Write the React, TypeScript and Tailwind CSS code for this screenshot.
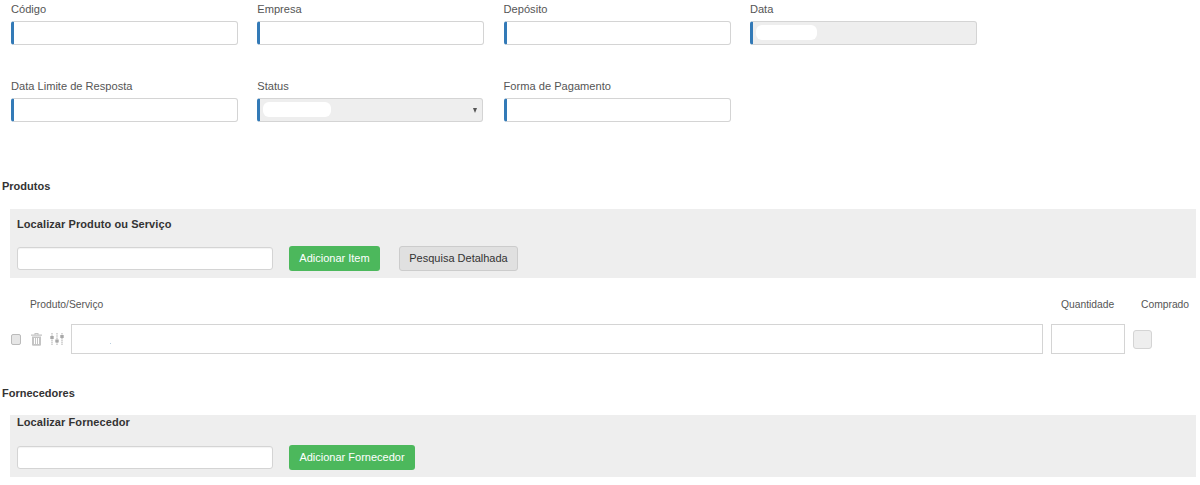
const inputBase = "block bg-white rounded-[3px] border border-[#d4d4d4] shadow-[inset_0_1px_1px_rgba(0,0,0,0.05)]";

const Field = ({ label, disabled, blob, arrow }: { label: string; disabled?: boolean; blob?: string; arrow?: boolean }) => (
  <div>
    <div className="h-[21px] text-[11.1px] leading-[18px] text-[#555]">{label}</div>
    <div
      className={`relative h-[24px] rounded-[3px] border border-[#d4d4d4] border-l-[3px] border-l-[#337ab7] ${
        disabled ? "bg-[#eeeeee]" : "bg-white"
      } ${arrow ? "mr-[1px]" : ""}`}
    >
      {blob && <div className={`absolute left-[3px] top-[3px] h-[15px] rounded-[6px] bg-white ${blob}`} />}
      {arrow && <div className="absolute right-[5px] top-[9px] h-0 w-0 border-x-[2.5px] border-t-[5px] border-x-transparent border-t-[#555]" />}
    </div>
  </div>
);

const TrashIcon = () => (
  <svg width="13" height="14" viewBox="0 0 13 14" className="shrink-0">
    <path d="M1 2.5h11v1.2H1zM4.5 1h4v1.5h-1V2h-2v.5h-1z" fill="#c4c4c4" />
    <path
      fillRule="evenodd"
      d="M2 4.5h9v8.2a1 1 0 0 1-1 1H3a1 1 0 0 1-1-1zM4 6v6h1V6zM6 6v6h1V6zM8 6v6h1V6z"
      fill="#c4c4c4"
    />
  </svg>
);

const SlidersIcon = () => (
  <svg width="14" height="14" viewBox="0 0 14 14" className="shrink-0">
    <path d="M2 1v12M7 1v12M12 1v12" stroke="#c6c6c6" strokeWidth="1.4" strokeDasharray="1.6 0.6" />
    <rect x="0.3" y="4" width="3.4" height="3" fill="#a8a8a8" />
    <rect x="5.3" y="7.5" width="3.4" height="3" fill="#a8a8a8" />
    <rect x="10.3" y="3" width="3.4" height="3" fill="#a8a8a8" />
  </svg>
);

const SectionTitle = ({ children }: { children: string }) => (
  <div className="pl-[2px] text-[11px] font-bold leading-[14px] text-[#333]">{children}</div>
);

const GreenButton = ({ children, width }: { children: string; width: string }) => (
  <div className={`flex h-[25px] items-center justify-center rounded-[3px] bg-[#4cb85c] text-[11px] text-white ${width}`}>{children}</div>
);

export default function App() {
  return (
    <div className="h-[485px] w-[1200px] overflow-hidden bg-white font-['Liberation_Sans',Arial,sans-serif]">
      <div className="grid grid-cols-[repeat(4,227px)] gap-x-[19.3px] gap-y-[32px] pl-[11px]">
        <Field label="Código" />
        <Field label="Empresa" />
        <Field label="Depósito" />
        <Field label="Data" disabled blob="w-[61px]" />
        <Field label="Data Limite de Resposta" />
        <Field label="Status" disabled blob="w-[68px]" arrow />
        <Field label="Forma de Pagamento" />
      </div>

      <div className="mt-[57px]">
        <SectionTitle>Produtos</SectionTitle>
      </div>

      <div className="ml-[10px] mt-[16px] h-[69px] w-[1186px] bg-[#eeeeee] pl-[7px] pt-[8px]">
        <div className="text-[11px] font-bold leading-[14px] tracking-[0.08px] text-[#333]">Localizar Produto ou Serviço</div>
        <div className="mt-[15px] flex items-center">
          <div className={`${inputBase} h-[23px] w-[256px]`} />
          <div className="ml-[16px]">
            <GreenButton width="w-[91px]">Adicionar Item</GreenButton>
          </div>
          <div className="ml-[19px] flex h-[25px] w-[119px] items-center justify-center rounded-[3px] border border-[#cccccc] bg-[#e0e0e0] text-[11px] text-[#333]">
            Pesquisa Detalhada
          </div>
        </div>
      </div>

      <div className="mt-[20px] flex h-[14px] items-center text-[10.3px] text-[#555]">
        <div className="ml-[30px] w-[1031px]">Produto/Serviço</div>
        <div className="w-[80px]">Quantidade</div>
        <div>Comprado</div>
      </div>

      <div className="mt-[12px] flex h-[30px] items-center">
        <div className="ml-[11px] h-[11px] w-[10px] rounded-[2px] border border-[#bbbbbb] bg-[#e6e6e6]" />
        <div className="ml-[9px]">
          <TrashIcon />
        </div>
        <div className="ml-[7px]">
          <SlidersIcon />
        </div>
        <div className="relative ml-[7px] h-[30px] w-[972px] border border-[#d4d4d4] bg-white">
          <div className="absolute left-[38px] top-[18px] h-[1px] w-[1px] bg-[#b9cfe0]" />
        </div>
        <div className="ml-[8px] h-[30px] w-[74px] border border-[#d4d4d4] bg-white" />
        <div className="ml-[8px] h-[19px] w-[19px] rounded-[3px] border border-[#d4d4d4] bg-[#eeeeee]" />
      </div>

      <div className="mt-[32px]">
        <SectionTitle>Fornecedores</SectionTitle>
      </div>

      <div className="ml-[10px] mt-[15px] h-[62px] w-[1186px] bg-[#eeeeee] pl-[7px]">
        <div className="text-[11px] font-bold leading-[14px] tracking-[0.08px] text-[#333]">Localizar Fornecedor</div>
        <div className="mt-[16px] flex items-center">
          <div className={`${inputBase} h-[23px] w-[256px]`} />
          <div className="ml-[16px]">
            <GreenButton width="w-[126px]">Adicionar Fornecedor</GreenButton>
          </div>
        </div>
      </div>
    </div>
  );
}
